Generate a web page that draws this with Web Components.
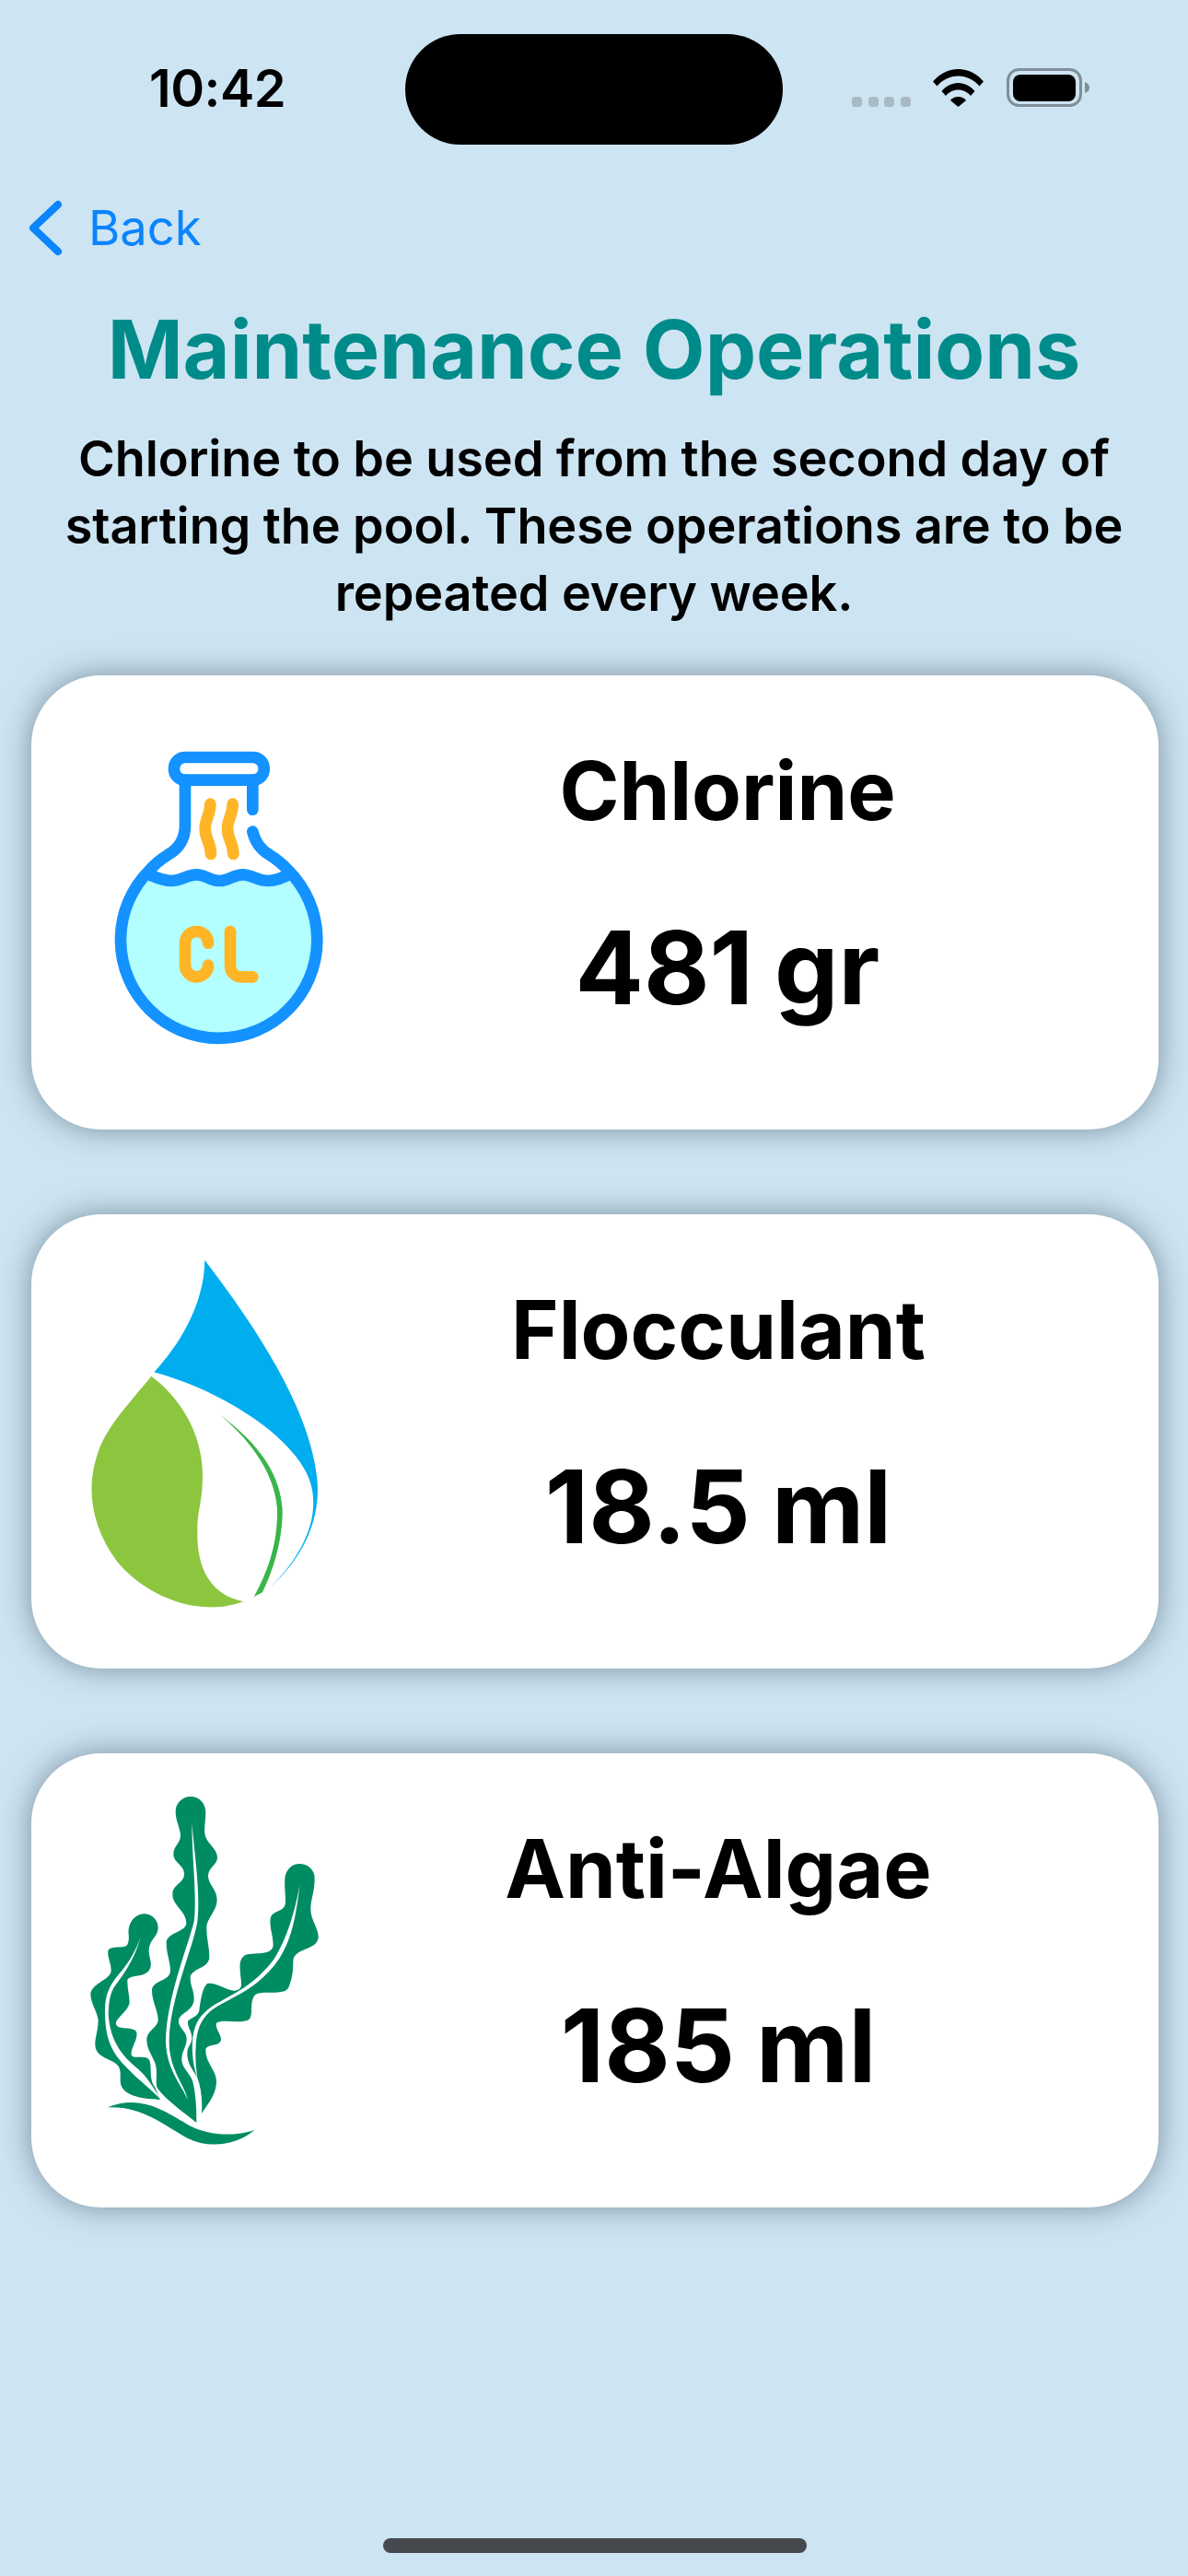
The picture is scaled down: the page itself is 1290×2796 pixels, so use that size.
<!DOCTYPE html>
<html>
<head>
<meta charset="utf-8">
<title>Maintenance Operations</title>
<style>
    html, body { margin: 0; padding: 0; background: #cde4f2; }
    body { font-family: "Inter", "Liberation Sans", sans-serif; color: #000; }
</style>
</head>
<body>
<template id="status-bar-template">
    <style>
        :host {
            display: grid;
            grid-template-columns: 440px 410px 1fr;
            height: 157px;
            padding-top: 37px;
            box-sizing: border-box;
        }
        .time {
            padding: 32px 0 0 162px;
            font-size: 56px;
            font-weight: 600;
            line-height: 54px;
            letter-spacing: -0.5px;
        }
        .island { background: #000; border-radius: 60px; }
        .icons { display: flex; align-items: flex-end; padding: 37px 0 0 75px; height: 42px; }
        .dots { display: flex; gap: 6.5px; margin-right: 24px; }
        .dots i { width: 11px; height: 11px; border-radius: 3.5px; background: #a9bac5; }
        svg { display: block; }
        .wifi { margin-right: 25px; }
    </style>
    <div class="time">10:42</div>
    <div class="island"></div>
    <div class="right">
        <div class="icons">
            <div class="dots"><i></i><i></i><i></i><i></i></div>
            <svg class="wifi" width="55" height="41" viewBox="0 0 55 41">
                <path d="M0 13.5C7 5 17 0 27.500 0S48 5 55 13.500L50.500 18.500C44.500 11.500 36.500 7.500 27.500 7.500S10.500 11.500 4.500 18.500Z"/>
                <path d="M9.500 24C14 18.500 20.500 15 27.500 15S41 18.500 45.500 24L41 29C37.500 25 33 22.500 27.500 22.500S17.500 25 14 29Z"/>
                <path d="M19 34C21 31.500 24 30 27.500 30S34 31.500 36 34L27.500 41Z"/>
            </svg>
            <svg width="90" height="42" viewBox="0 0 90 42">
                <rect x="1.500" y="1.500" width="79" height="39" rx="12" fill="none" stroke="#7f8f99" stroke-width="3"/>
                <rect x="7" y="7" width="68" height="29" rx="8"/>
                <path d="M85 15C88 16 90 18 90 21S88 26 85 27Z" fill="#7f8f99"/>
            </svg>
        </div>
    </div>
</template>

<template id="back-link-template">
    <style>
        :host {
            display: flex;
            align-items: center;
            gap: 28px;
            padding-left: 31px;
            margin-top: 60px;
            height: 61px;
            color: #0a84ff;
            font-size: 52.500px;
            line-height: 61px;
        }
        svg { display: block; }
    </style>
    <svg width="37" height="61" viewBox="0 0 37 61">
        <path d="M32 5L5 30.500L32 56" fill="none" stroke="#0a84ff" stroke-width="8" stroke-linecap="round" stroke-linejoin="round"/>
    </svg>
    <slot></slot>
</template>

<template id="page-intro-template">
    <style>
        :host { display: block; text-align: center; padding: 0 30px; }
        h1 {
            margin: 48px 0 0;
            font-size: 88px;
            line-height: 106px;
            font-weight: 700;
            color: #008b8b;
        }
        p {
            margin: 29px 0 0;
            font-size: 54px;
            line-height: 73px;
            font-weight: 600;
            letter-spacing: -0.1px;
        }
    </style>
    <h1><slot name="title"></slot></h1>
    <p><slot name="text"></slot></p>
</template>

<template id="dose-card-template">
    <style>
        :host {
            display: flex;
            box-sizing: border-box;
            height: 493px;
            margin: 0 32px 0 34px;
            background: #fff;
            border-radius: 76px;
            box-shadow: 0 0 32px rgba(40, 60, 75, .5);
            padding-right: 78px;
        }
        .icon { flex: none; }
        .info {
            flex: 1;
            display: flex;
            flex-direction: column;
            align-items: center;
        }
        .name {
            margin-top: 75px;
            font-size: 88px;
            line-height: 100px;
            font-weight: 700;
        }
        .amount {
            margin-top: 77px;
            font-size: 110px;
            line-height: 130px;
            font-weight: 700;
            word-spacing: -3px;
        }
    </style>
    <div class="icon"><slot name="icon"></slot></div>
    <div class="info">
        <div class="name"><slot name="name"></slot></div>
        <div class="amount"><slot name="amount"></slot></div>
    </div>
</template>

<template id="home-bar-template">
    <style>
        :host { display: block; margin: auto 414px 25px 416px; height: 16px; border-radius: 8px; background: #464a4e; }
    </style>
</template>

<template id="pool-screen-template">
    <style>
        :host { display: flex; flex-direction: column; height: 2796px; }
        .cards { display: flex; flex-direction: column; gap: 92px; margin-top: 53px; }
    </style>
    <status-bar></status-bar>
    <slot name="back"></slot>
    <slot name="intro"></slot>
    <div class="cards"><slot></slot></div>
    <home-bar></home-bar>
</template>

<pool-screen>
    <back-link slot="back">Back</back-link>
    <page-intro slot="intro">
        <span slot="title">Maintenance Operations</span>
        <span slot="text">Chlorine to be used from the second day of starting the pool. These operations are to be repeated every week.</span>
    </page-intro>

    <dose-card>
        <svg slot="icon" style="display:block;margin:48px 0 0 46px" width="320" height="380" viewBox="0 0 960 1140">
            <path d="M246 505C270 515 290 525 318 525C350 525 370 505 400 505C430 505 445 525 475 525C505 525 520 505 550 505C580 505 600 525 632 525C660 525 680 515 700 505A320 320 0 1 1 246 505Z" fill="#b3ffff"/>
            <g fill="none" stroke="#1492ff" stroke-width="38" stroke-linecap="round" stroke-linejoin="round">
                <rect x="327" y="123" width="293" height="74" rx="36"/>
                <path d="M363 197V345C363 395 335 425 305 442C285 454 265 470 246 492A320 320 0 1 0 700 492C680 470 660 454 640 442C610 425 590 395 583 365"/>
                <path d="M583 197V293"/>
                <path d="M246 505C270 515 290 525 318 525C350 525 370 505 400 505C430 505 445 525 475 525C505 525 520 505 550 505C580 505 600 525 632 525C660 525 680 515 700 505"/>
            </g>
            <g fill="none" stroke="#ffb526" stroke-width="38" stroke-linecap="round" stroke-linejoin="round">
                <path d="M445 275C445 310 428 325 428 355C428 390 447 400 447 438"/>
                <path d="M518 275C518 310 501 325 501 355C501 390 520 400 520 438"/>
                <path d="M438 728C438 705 420 690 400 690C378 690 363 708 363 728V800C363 820 380 838 400 838C420 838 438 822 438 800"/>
                <path d="M510 690V800C510 822 525 838 545 838H583"/>
            </g>
        </svg>
        <span slot="name">Chlorine</span>
        <span slot="amount">481 gr</span>
    </dose-card>

    <dose-card>
        <svg slot="icon" style="display:block;margin:33px -10px 0 36px" width="320" height="430" viewBox="0 0 960 1290">
            <path d="M457 50C640 290 790 530 820 740C840 860 800 1000 668 1118C770 1020 830 900 805 790C780 660 560 490 292 415C370 330 455 200 457 50Z" fill="#00aeef"/>
            <path d="M283 428C200 530 130 600 105 690C70 800 90 920 170 1030C250 1130 420 1220 583 1162C480 1140 430 1060 433 930C433 860 450 840 450 750C450 620 380 500 283 428Z" fill="#8cc63f"/>
            <path d="M505 552C620 640 700 730 710 860C712 960 680 1060 645 1132L617 1147C665 1060 695 970 693 860C685 760 630 660 505 552Z" fill="#39b54a"/>
        </svg>
        <span slot="name">Flocculant</span>
        <span slot="amount">18.5 ml</span>
    </dose-card>

    <dose-card>
        <svg slot="icon" style="display:block;margin:26px -10px 0 36px" width="320" height="420" viewBox="0 0 960 1260">
            <g fill="#008c62">
                <path d="M410 63C440 63 460 85 460 115C460 150 452 170 460 195C470 220 498 235 498 262C498 285 468 295 468 322C468 350 497 365 497 400C497 435 463 460 463 490C463 530 472 550 472 585C472 625 410 620 410 655C410 680 422 695 422 720C422 765 372 765 372 795C372 815 398 830 398 850C398 880 382 890 382 920C382 950 415 965 420 1000C430 1050 430 1090 430 1125C380 1085 330 1050 302 1012C295 990 305 960 295 930C285 905 268 885 268 855C268 825 305 815 305 790C305 760 285 730 285 695C285 660 345 665 345 630C345 600 332 575 332 540C332 505 397 505 397 475C397 435 352 420 352 380C352 350 390 345 390 315C390 285 355 280 355 250C355 225 378 215 378 190C378 165 362 145 362 110C362 85 385 63 410 63Z"/>
                <path d="M765 282C795 282 815 303 815 330C815 375 802 395 802 430C802 465 827 490 827 520C827 565 745 555 745 600C745 640 740 660 730 685C715 715 640 690 620 710C600 735 618 775 600 790C570 805 520 785 495 800C490 820 510 835 510 855C505 880 460 865 460 890C460 930 495 955 495 990C495 1035 465 1065 447 1095C450 1050 445 1010 432 975C415 950 400 930 400 900C400 875 415 870 415 850C415 825 400 815 402 795C415 780 440 780 440 750C445 720 450 685 465 672C490 665 530 695 555 695C585 690 575 670 573 640C570 610 570 590 590 578C625 570 680 580 680 545C680 515 665 485 672 455C685 430 720 440 720 405C720 375 716 355 718 330C720 303 740 282 765 282Z"/>
                <path d="M260 445C285 445 305 465 305 490C305 520 275 530 275 565C275 590 290 610 275 630C255 655 205 640 205 665C205 690 212 710 212 735C205 765 165 785 168 805C175 825 225 810 235 830C240 855 215 880 218 905C225 920 270 900 278 925C285 955 275 985 295 1010L312 1050C260 1048 200 1040 185 1005C178 985 188 960 175 940C155 915 100 915 100 870C100 845 110 825 110 790C105 760 85 735 85 705C90 670 150 660 152 630C152 605 140 590 142 565C150 545 195 560 205 545C215 525 205 510 210 490C215 465 235 445 260 445Z"/>
                <path d="M140 1075C250 1030 330 1090 400 1130C470 1170 560 1170 620 1148C560 1200 470 1210 400 1175C320 1130 250 1070 140 1075Z"/>
            </g>
            <g fill="#fff">
                <path d="M415 150C425 260 443 380 433 470C418 560 343 720 341 860C341 950 390 1000 402 1050C380 1000 332 950 330 860C332 720 402 550 422 470C432 390 415 260 415 150Z"/>
                <path d="M767 348C755 440 745 520 700 590C640 680 560 710 500 745C440 780 430 830 428 880C425 920 430 950 432 975C422 950 414 900 417 860C422 800 442 772 492 739C562 699 622 674 684 590C727 520 750 440 767 348Z"/>
                <path d="M248 520C235 570 210 620 175 665C150 695 145 720 143 770C148 860 190 910 240 950C270 975 295 1020 315 1050C280 1015 240 985 202 945C152 895 132 850 132 760C132 700 152 670 187 630C212 600 235 560 248 520Z"/>
            </g>
        </svg>
        <span slot="name">Anti-Algae</span>
        <span slot="amount">185 ml</span>
    </dose-card>
</pool-screen>

<script>
    class ShadowBase extends HTMLElement {
        constructor() {
            super();
            const template = document.querySelector(this.constructor.templateId);
            this.attachShadow({mode: 'open'});
            this.shadowRoot.appendChild(template.content.cloneNode(true));
        }
    }
    const parts = {
        'status-bar': '#status-bar-template',
        'back-link': '#back-link-template',
        'page-intro': '#page-intro-template',
        'dose-card': '#dose-card-template',
        'home-bar': '#home-bar-template',
        'pool-screen': '#pool-screen-template'
    };
    for (const name in parts) {
        customElements.define(name, class extends ShadowBase {
            static get templateId() { return parts[name]; }
        });
    }
</script>
</body>
</html>
